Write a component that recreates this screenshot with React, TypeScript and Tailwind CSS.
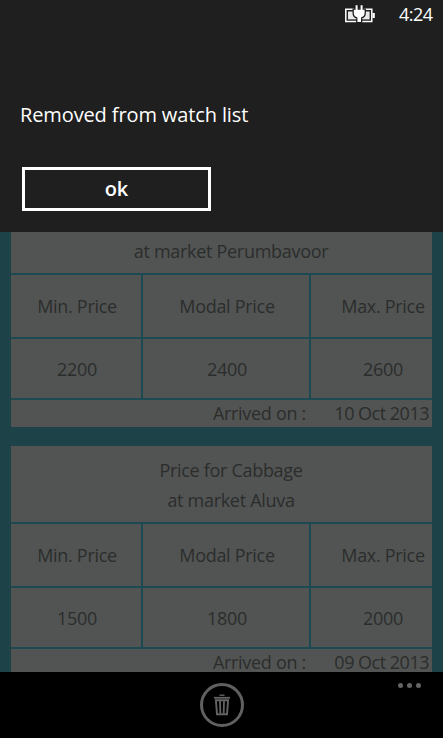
import type { ReactNode } from 'react';

interface PriceEntry {
  item: string;
  market: string;
  min: number;
  modal: number;
  max: number;
  arrived: string;
}

const entries: PriceEntry[] = [
  { item: 'Beans', market: 'Perumbavoor', min: 2200, modal: 2400, max: 2600, arrived: '10 Oct 2013' },
  { item: 'Cabbage', market: 'Aluva', min: 1500, modal: 1800, max: 2000, arrived: '09 Oct 2013' },
];

function BatteryIcon() {
  const plug = 'M10.6 1.3h2v4.4h3V1.3h2v4.4h2v3.6c0 2-1.4 3.6-3.6 4.2V18h-3.6v-4.5c-2.2-.6-3.6-2.2-3.6-4.2V5.7h1.8z';
  return (
    <svg width="30" height="20" viewBox="0 0 30 20" fill="none">
      <path d="M.8 5.2h26v12.4H.8z" stroke="#fff" strokeWidth="1.5" />
      <path d="M3 7.5h21.6v7.9H3z" fill="#e8e8e8" />
      <path d="M27.5 9h2.3v5h-2.3z" fill="#fff" />
      {/* dark halo separates the plug from the battery */}
      <path d={plug} stroke="#1f1f1f" strokeWidth="2.6" />
      <path d={plug} fill="#fff" />
    </svg>
  );
}

function TrashIcon() {
  return (
    <svg width="16" height="22" viewBox="0 0 16 22" fill="none" stroke="#646464">
      <path d="M5.5 1.2h5" strokeWidth="1.4" />
      <path d="M0 3.8h16" strokeWidth="1.8" />
      <path d="M1.9 6.3h12.2l-1.1 13.9H3z" strokeWidth="1.9" />
      <path d="M6 6.5l.3 13M10 6.5l-.3 13" strokeWidth="1.8" />
    </svg>
  );
}

function Cell({ children }: { children: ReactNode }) {
  return <div className="flex items-center justify-center bg-[#525453] pl-0.5">{children}</div>;
}

function PriceCard({ entry, showItem = true }: { entry: PriceEntry; showItem?: boolean }) {
  return (
    <div className="h-[230px] w-[421px] shrink-0 overflow-hidden">
      <div className="grid w-[442px] grid-cols-[130px_166px_142px] grid-rows-[76px_62px_59px_27px] gap-0.5 whitespace-nowrap bg-[#1d4a52]">
        <div className="col-span-3 flex flex-col justify-end bg-[#525453] pb-[7px] pr-0.5 text-center leading-[30px]">
          {showItem && <p>Price for {entry.item}</p>}
          <p>at market {entry.market}</p>
        </div>
        <Cell>Min. Price</Cell>
        <Cell>Modal Price</Cell>
        <Cell>Max. Price</Cell>
        <Cell>{entry.min}</Cell>
        <Cell>{entry.modal}</Cell>
        <Cell>{entry.max}</Cell>
        <div className="col-span-3 flex justify-between bg-[#525453] pr-6 leading-[26px]">
          <span className="w-[295px] text-right">Arrived on :</span>
          <span className="tracking-[-0.5px]">{entry.arrived}</span>
        </div>
      </div>
    </div>
  );
}

export default function App() {
  return (
    <div className="flex h-[738px] w-[443px] flex-col overflow-hidden bg-black font-['Open_Sans','Noto_Sans',sans-serif]">
      <section className="flex h-[232px] shrink-0 flex-col bg-[#1f1f1f] text-white">
        <div className="flex h-7 items-center justify-end pr-2.5">
          <BatteryIcon />
          <span className="ml-6 w-[34px] text-lg leading-7 tracking-[-0.5px]">4:24</span>
        </div>
        <p className="mt-[73px] pl-5 text-xl leading-7 tracking-[-0.12px]">Removed from watch list</p>
        <button className="ml-[22px] mt-[38px] h-11 w-[189px] border-[3px] border-white text-xl font-semibold leading-none">
          ok
        </button>
      </section>

      <main className="flex h-[440px] shrink-0 flex-col gap-[19px] overflow-hidden bg-[#1d4349] pl-[11px] text-lg tracking-[-0.3px] text-[#2b2d2c]">
        {/* scrolled list: the item line of the first card sits behind the message */}
        <div className="-mt-[35px]">
          <PriceCard entry={entries[0]} showItem={false} />
        </div>
        <PriceCard entry={entries[1]} />
      </main>

      <footer className="grid h-[66px] shrink-0 grid-cols-[1fr_44px_1fr] bg-black">
        <button className="col-start-2 mt-[11px] flex h-11 w-11 items-center justify-center rounded-full border-[3px] border-[#606060]">
          <TrashIcon />
        </button>
        <div className="mr-[22px] mt-[11px] flex justify-end gap-1">
          <span className="size-[5px] rounded-full bg-[#646464]" />
          <span className="size-[5px] rounded-full bg-[#646464]" />
          <span className="size-[5px] rounded-full bg-[#646464]" />
        </div>
      </footer>
    </div>
  );
}
